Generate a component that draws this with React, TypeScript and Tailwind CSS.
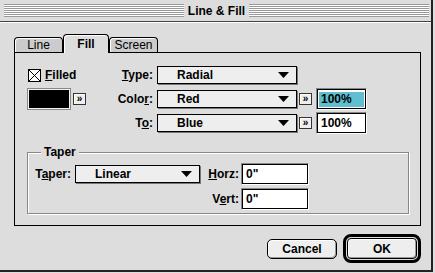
function Arrow() {
  return (
    <svg width="11" height="6" viewBox="0 0 11 6" className="shrink-0">
      <polygon points="0,0 11,0 5.5,6" fill="#000" />
    </svg>
  );
}

function Popup({ value, className }: { value: string; className: string }) {
  return (
    <div
      className={`${className} h-[18px] flex items-center border border-black bg-[#eeeeee] shadow-[1px_1px_0_#777] pl-[19px] pr-[7px] font-bold`}
    >
      <span className="flex-1 leading-none">{value}</span>
      <Arrow />
    </div>
  );
}

function More() {
  return (
    <div className="w-[13px] h-[12px] flex items-center justify-center border border-[#333] bg-[#eeeeee] shadow-[inset_1px_1px_0_#fff] text-[10px] font-bold leading-none pb-[1px]">
      »
    </div>
  );
}

function Field({
  value,
  className,
  selected,
}: {
  value: string;
  className: string;
  selected?: boolean;
}) {
  return (
    <div
      className={`${className} h-[22px] border border-t-[#888] border-l-[#888] border-r-white border-b-white`}
    >
      <div className="h-full border border-black bg-white flex items-center px-[1px] font-bold">
        {selected ? (
          <span className="flex-1 h-[15px] bg-[#5fbfd0] leading-[15px] pl-[2px]">{value}</span>
        ) : (
          <span className="pl-[2px] leading-none">{value}</span>
        )}
      </div>
    </div>
  );
}

function Tab({ label, active }: { label: string; active?: boolean }) {
  if (active) {
    return (
      <div className="w-[46px] h-[19px] -mb-[1px] z-10 flex items-center justify-center border border-b-0 border-black rounded-t-[4px] bg-[#dddddd] shadow-[inset_1px_1px_0_#fff] font-bold pb-[1px]">
        {label}
      </div>
    );
  }
  return (
    <div className="w-[49px] h-[15px] flex items-center justify-center border border-b-0 border-black rounded-t-[4px] bg-[#cccccc] shadow-[inset_1px_1px_0_#fff]">
      {label}
    </div>
  );
}

function Stripes() {
  return (
    <div className="flex-1 h-[13px] bg-[image:repeating-linear-gradient(#999_0_1px,#fff_1px_2px)]" />
  );
}

export default function App() {
  return (
    <div className="w-[435px] h-[273px] bg-[#dddddd] text-[12px] text-black [font-family:'Liberation_Sans',Arial,sans-serif]">
      <div className="w-[433px] h-[272px] border-r-2 border-b-2 border-[#222] flex flex-col">
        {/* title bar */}
        <div className="h-[22px] flex items-center pl-[4px] pr-[2px] border-b border-[#444] shadow-[0_1px_0_#fff]">
          <Stripes />
          <div className="w-[65px] text-center font-bold text-[12px] leading-none">Line &amp; Fill</div>
          <Stripes />
        </div>

        <div className="pl-[14px] pr-[10px] pt-[12px] flex flex-col">
          {/* tabs */}
          <div className="h-[18px] flex items-end">
            <Tab label="Line" />
            <Tab label="Fill" active />
            <Tab label="Screen" />
          </div>

          {/* panel */}
          <div className="h-[174px] border border-black flex flex-col">
            <div className="pl-[12px] pt-[11px] flex flex-col gap-[2px]">
              <div className="h-[22px] flex items-center">
                <div className="w-[78px] flex items-center">
                  <div className="ml-[1px] w-[13px] h-[13px] border border-black bg-white">
                    <svg width="11" height="11" viewBox="0 0 11 11" className="block">
                      <line x1="0" y1="0" x2="11" y2="11" stroke="#000" strokeWidth="1" />
                      <line x1="11" y1="0" x2="0" y2="11" stroke="#000" strokeWidth="1" />
                    </svg>
                  </div>
                  <span className="ml-[4px] font-bold">
                    <u>F</u>illed
                  </span>
                </div>
                <div className="w-[48px] text-right font-bold">
                  <u>T</u>ype:
                </div>
                <Popup value="Radial" className="ml-[4px] w-[140px]" />
              </div>

              <div className="h-[22px] flex items-center">
                <div className="w-[78px] flex items-center">
                  <div className="w-[44px] h-[22px] border border-[#888] p-[1px] bg-[#f4f4f4]">
                    <div className="w-full h-full bg-black" />
                  </div>
                  <div className="ml-[2px]">
                    <More />
                  </div>
                </div>
                <div className="w-[48px] text-right font-bold">
                  Colo<u>r</u>:
                </div>
                <Popup value="Red" className="ml-[4px] w-[140px]" />
                <div className="ml-[2px]">
                  <More />
                </div>
                <Field value="100%" className="ml-[4px] w-[51px]" selected />
              </div>

              <div className="h-[22px] flex items-center">
                <div className="w-[78px]" />
                <div className="w-[48px] text-right font-bold">
                  T<u>o</u>:
                </div>
                <Popup value="Blue" className="ml-[4px] w-[140px]" />
                <div className="ml-[2px]">
                  <More />
                </div>
                <Field value="100%" className="ml-[4px] w-[51px]" />
              </div>
            </div>

            {/* taper group */}
            <div className="relative mt-[18px] ml-[12px] w-[382px] h-[62px] border border-[#888] shadow-[inset_1px_1px_0_#fff,1px_1px_0_#fff] pt-[10px] flex flex-col gap-[3px]">
              <div className="absolute -top-[8px] left-[13px] px-[3px] bg-[#dddddd] font-bold leading-[14px]">
                Taper
              </div>
              <div className="h-[22px] flex items-center">
                <div className="w-[43px] text-right font-bold">
                  T<u>a</u>per:
                </div>
                <Popup value="Linear" className="ml-[4px] w-[125px]" />
                <div className="ml-[7px] w-[32px] text-right font-bold">
                  <u>H</u>orz:
                </div>
                <Field value={'0"'} className="ml-[2px] w-[68px]" />
              </div>
              <div className="h-[22px] flex items-center">
                <div className="w-[179px]" />
                <div className="w-[32px] text-right font-bold">
                  V<u>e</u>rt:
                </div>
                <Field value={'0"'} className="ml-[2px] w-[68px]" />
              </div>
            </div>
          </div>

          {/* buttons */}
          <div className="mt-[8px] h-[29px] flex items-center justify-end">
            <div className="w-[70px] h-[20px] flex items-center justify-center border border-black rounded-[5px] bg-[#eeeeee] shadow-[inset_1px_1px_0_#fff,inset_-1px_-1px_0_#999] font-bold">
              Cancel
            </div>
            <div className="ml-[6px] w-[78px] h-[29px] border-[3px] border-black rounded-[8px] p-[1px]">
              <div className="w-full h-full flex items-center justify-center border border-black rounded-[4px] bg-[#eeeeee] shadow-[inset_1px_1px_0_#fff,inset_-1px_-1px_0_#999] font-bold">
                OK
              </div>
            </div>
          </div>
        </div>
      </div>
    </div>
  );
}
